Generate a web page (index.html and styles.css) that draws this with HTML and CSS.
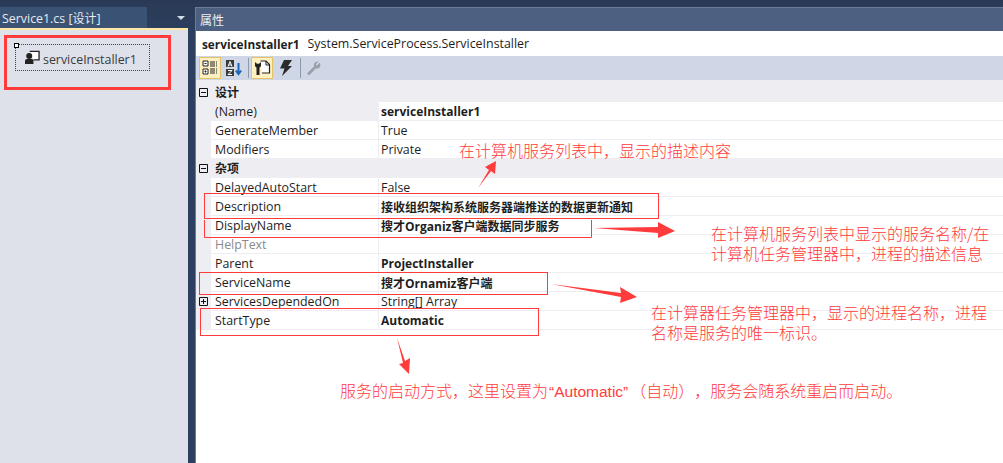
FILE: index.html
```html
<!DOCTYPE html>
<html lang="zh-CN">
<head>
<meta charset="utf-8">
<title>Service1.cs [设计]</title>
<link rel="stylesheet" href="styles.css">
</head>
<body>
<div class="page">
  <section class="designer">
    <div class="tabbar">
      <div class="tab">Service1.cs [<span class="cjk">设计</span>]</div>
      <svg class="tabmenu" width="8" height="4" viewBox="0 0 8 4"><path d="M0 0h8L4 4z" fill="#d5dbe6"/></svg>
    </div>
    <div class="accent"></div>
    <div class="tray">
      <div class="component">
        <span class="handle"></span>
        <svg class="compicon" width="15" height="15" viewBox="0 0 16 16">
          <path d="M5 1.500h10v9H9" fill="#fff" stroke="#222" stroke-width="1.400"/>
          <circle cx="4.500" cy="6.500" r="3.200" fill="#222"/>
          <path d="M0 15v-3.500q0-2 2-2h5q2 0 2 2V15z" fill="#222"/>
        </svg>
        <span class="complabel">serviceInstaller1</span>
      </div>
    </div>
  </section>
  <section class="props">
    <div class="title cjk">属性</div>
    <div class="objname"><b>serviceInstaller1</b><span>System.ServiceProcess.ServiceInstaller</span></div>
    <div class="toolbar">
      <span class="tool on">
        <svg width="16" height="16" viewBox="0 0 16 16"><path d="M1 1h5v5H1zM1 9h5v5H1z" fill="#fff" stroke="#222"/><path d="M2.500 3.500h2M2.500 11.500h2M3.500 10.500v2" stroke="#222"/><path d="M8 2h7M8 4h7M8 6h7M8 9h7M8 11h7M8 13h7" stroke="#222" stroke-dasharray="5 1"/></svg>
      </span>
      <span class="tool">
        <svg width="18" height="16" viewBox="0 0 18 16"><rect x="1" y="0" width="8" height="7" fill="#3a3a3a"/><path d="M3 6.500 5 1.500 7 6.500M3.700 5h2.600" stroke="#fff" fill="none"/><rect x="1" y="9" width="8" height="7" fill="#3a3a3a"/><path d="M3 10.500h4l-4 4h4" stroke="#fff" fill="none"/><path d="M13.500 3v11M10.800 10.500l2.700 3.500 2.700-3.500" stroke="#1b66b8" stroke-width="2" fill="none"/></svg>
      </span>
      <span class="sep"></span>
      <span class="tool on">
        <svg width="18" height="18" viewBox="0 0 18 18"><path d="M7.500 2H13l3.500 3.500V14H9" fill="#fff" stroke="#222" stroke-width="1.200"/><path d="M13 2v4h3.500" fill="none" stroke="#222"/><path d="M2 3v3.500q0 1.500 1.500 2V16h3V8.500Q8 8 8 6.500V3L6 4.800H4z" fill="#222"/></svg>
      </span>
      <span class="tool">
        <svg width="14" height="18" viewBox="0 0 14 18"><path d="M5 1h8L9 7h4L3 17l2.500-7.500H1z" fill="#2b2b2b"/></svg>
      </span>
      <span class="sep"></span>
      <span class="tool">
        <svg width="15" height="15" viewBox="0 0 15 15"><path d="M14 1.500 11 4.500 9.800 3.500 12.500.5Q9 0 8 3q-.3 1.400.2 2.300L1 12.500 3 14.500l7-7.200q1.300.5 2.600 0Q15 6 14 1.500z" fill="#9b9fa8"/></svg>
      </span>
    </div>
    <div class="grid">
      <div class="row cat"><svg class="exp" width="9" height="9" viewBox="0 0 9 9"><path d="M.5.500h8v8h-8zM2 4.500h5" fill="none" stroke="#111"/></svg><div class="name cjk">设计</div></div>
      <div class="row sel"><div class="name">(Name)</div><div class="val strong">serviceInstaller1</div></div>
      <div class="row"><div class="name">GenerateMember</div><div class="val">True</div></div>
      <div class="row"><div class="name">Modifiers</div><div class="val">Private</div></div>
      <div class="row cat"><svg class="exp" width="9" height="9" viewBox="0 0 9 9"><path d="M.5.500h8v8h-8zM2 4.500h5" fill="none" stroke="#111"/></svg><div class="name cjk">杂项</div></div>
      <div class="row"><div class="name">DelayedAutoStart</div><div class="val">False</div></div>
      <div class="row"><div class="name">Description</div><div class="val strong cjk">接收组织架构系统服务器端推送的数据更新通知</div></div>
      <div class="row"><div class="name">DisplayName</div><div class="val strong"><span class="cjk">搜才</span>Organiz<span class="cjk">客户端数据同步服务</span></div></div>
      <div class="row"><div class="name muted">HelpText</div><div class="val"></div></div>
      <div class="row"><div class="name">Parent</div><div class="val strong">ProjectInstaller</div></div>
      <div class="row"><div class="name">ServiceName</div><div class="val strong"><span class="cjk">搜才</span>Ornamiz<span class="cjk">客户端</span></div></div>
      <div class="row"><svg class="exp" width="9" height="9" viewBox="0 0 9 9"><path d="M.5.500h8v8h-8zM2 4.500h5M4.500 2v5" fill="none" stroke="#111"/></svg><div class="name">ServicesDependedOn</div><div class="val">String[] Array</div></div>
      <div class="row"><div class="name">StartType</div><div class="val strong">Automatic</div></div>
    </div>
  </section>
</div>
<svg class="marks" width="1003" height="463" viewBox="0 0 1003 463">
  <rect class="thick" x="5.500" y="36.500" width="164" height="52"/>
  <rect class="thin" x="204.500" y="193.500" width="454" height="25"/>
  <path class="thin" d="M204.500 220v17.500H591.500V220"/>
  <rect class="thin" x="199.500" y="272.500" width="348" height="22"/>
  <rect class="thin" x="200.500" y="308.500" width="338" height="27"/>
  <path class="arrow" d="M478 188 489 170 485 167 496 161 495 174 491 171z"/>
  <path class="arrow" d="M594 228 658 227 658 222 675 231 658 238 658 233z"/>
  <path class="arrow" d="M551 284 621 293 620 287 637 297 620 303 621 297z"/>
  <path class="arrow" d="M397 338 405 361 410 358 409 374 399 364 403 363z"/>
</svg>
<div class="note note-a">在计算机服务列表中，显示的描述内容</div>
<div class="note note-b">在计算机服务列表中显示的服务名称/在<br>计算机任务管理器中，进程的描述信息</div>
<div class="note note-c">在计算器任务管理器中，显示的进程名称，进程<br>名称是服务的唯一标识。</div>
<div class="note note-d">服务的启动方式，这里设置为<span class="latin">“Automatic”</span>（自动），服务会随系统重启而启动。</div>
</body>
</html>
```
FILE: styles.css
```css
* { box-sizing: border-box; }
html, body { margin: 0; height: 100%; overflow: hidden; }
body {
  background: #2c3f5e;
  font-family: "Open Sans", "Noto Sans CJK SC", sans-serif;
  font-size: 12.4px;
  color: #1e1e1e;
  position: relative;
}
.cjk { font-family: "Noto Sans CJK SC", sans-serif; font-size: 12px; }
.page { display: flex; height: 463px; gap: 7px; background: linear-gradient(#2a3a56 0, #2c3f5e 30px); }

.designer { width: 188px; display: flex; flex-direction: column; padding-top: 7px; }
.tabbar { height: 21px; display: flex; align-items: center; flex: none; }
.tab {
  width: 147px; height: 21px; padding-left: 2px;
  background: #3a5274; color: #e8ecf2; line-height: 21px; white-space: nowrap;
}
.tabmenu { margin-left: 30px; }
.accent { height: 2px; background: #ffe8a6; flex: none; }
.tray { flex: 1; background: #dee1ea; padding: 14px 0 0 15px; }
.component {
  position: relative; width: 135px; height: 27px; padding-left: 9px;
  display: flex; align-items: center; gap: 3px;
  border: 1px dotted #444; color: #3a3a3a; white-space: nowrap;
}
.complabel { margin-top: 3px; }
.handle {
  position: absolute; left: -2px; top: -2px; width: 5px; height: 5px;
  background: #fff; border: 1px solid #000;
}

.props { flex: 1; display: flex; flex-direction: column; margin-top: 7px; background: #fff; border-left: 1px solid #6b7b98; }
.title {
  height: 24px; flex: none; background: #4d6082; color: #eef1f6;
  padding-left: 4px; line-height: 24px; border-top: 1px solid #6b7b98;
}
.objname { height: 25px; flex: none; padding-left: 6px; display: flex; align-items: center; gap: 8px; white-space: nowrap; }
.objname b { font-weight: 700; font-size: 11.8px; }
.toolbar { height: 24px; flex: none; background: #cfd6e5; display: flex; align-items: center; padding-left: 3px; }
.tool { width: 20px; height: 22px; margin-right: 3px; display: flex; align-items: center; justify-content: center; }
.tool.on { width: 22px; background: #fff0c2; border: 1px solid #e5c365; }
.sep { width: 1px; height: 20px; background: #8f99ad; margin: 0 2px 0 1px; }

.grid { padding-top: 3px; background: linear-gradient(#eeeef2 3px, #fff 3px); }
.row {
  position: relative; display: flex; height: 19px; line-height: 20px;
  padding-left: 15px; background: #eeeef2;
}
.row .name { width: 167px; padding-left: 4px; background: #fff; border-bottom: 1px solid #eeeef2; white-space: nowrap; }
.row .val { flex: 1; padding-left: 2px; background: #fff; border-bottom: 1px solid #eeeef2; border-left: 1px solid #eeeef2; white-space: nowrap; }
.row.cat .name { background: transparent; border: 0; font-weight: 700; line-height: 18px; }
.row.sel .name { background: #eeeef2; }
.val.strong { font-weight: 700; font-size: 12px; }
.val.strong.cjk, .val .cjk { font-size: 12px; font-weight: 700; }
.muted { color: #8a8a8a; }
.exp { position: absolute; left: 3px; top: 5px; }

.marks { position: absolute; left: 0; top: 0; pointer-events: none; }
.thick { fill: none; stroke: #ff3b3b; stroke-width: 3; }
.thin { fill: none; stroke: #ff3b3b; stroke-width: 1; }
.arrow { fill: #ff3b3b; }

.note {
  position: absolute; color: #ff3b3b; white-space: nowrap;
  font-family: "Noto Sans CJK SC", sans-serif; font-size: 16px; line-height: 20px; font-weight: 300;
  text-spacing-trim: space-all;
}
.latin { font-family: "Liberation Sans", sans-serif; font-size: 15.5px; padding: 0 2px 0 1px; }
.note-a { left: 459px; top: 140px; }
.note-b { left: 711px; top: 223px; }
.note-c { left: 651px; top: 302px; }
.note-d { left: 340px; top: 380px; }
```
